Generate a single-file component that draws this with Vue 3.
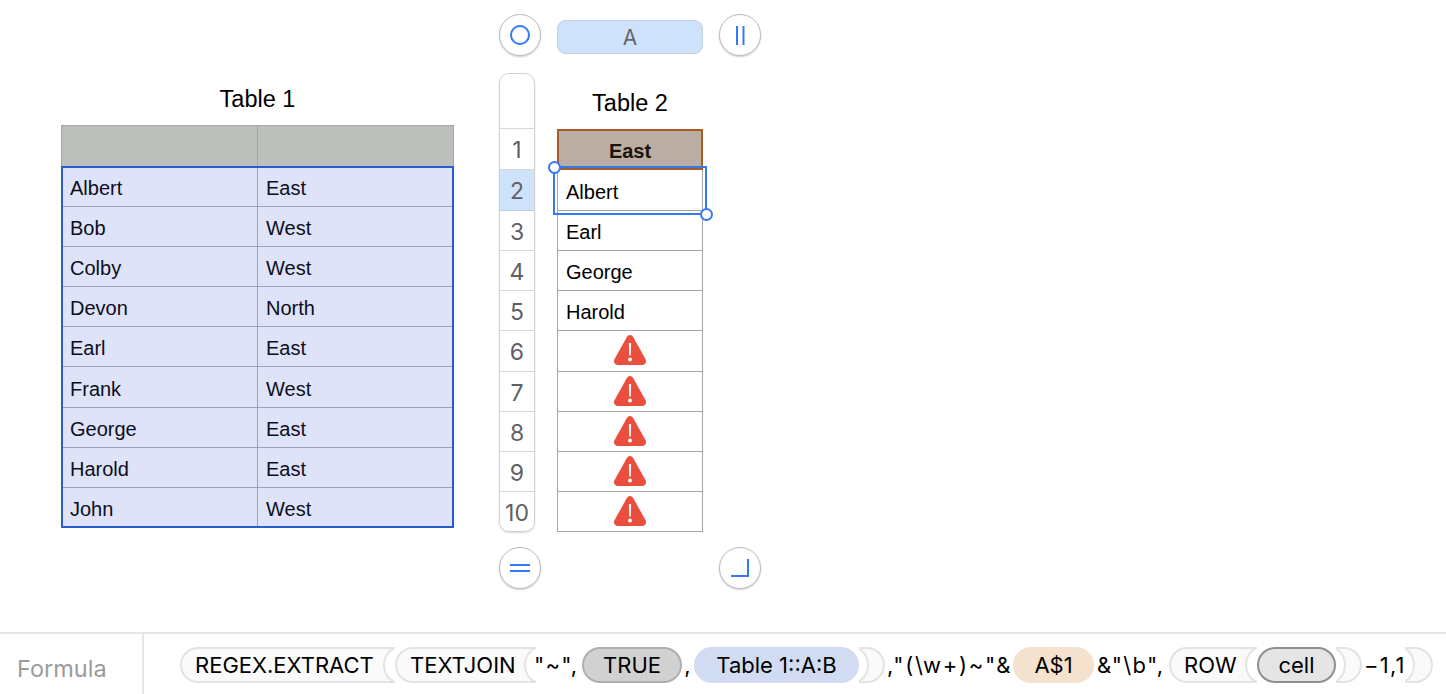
<template>
  <div class="page">
    <div class="canvas">
      <!-- Table 1 -->
      <div class="table-one">
        <div class="title">Table 1</div>
        <div class="t1-head">
          <div class="t1-hcell"></div>
          <div class="t1-hcell"></div>
        </div>
        <div class="t1-body">
          <template v-for="row in source" :key="row[0]">
            <div class="t1-cell">{{ row[0] }}</div>
            <div class="t1-cell">{{ row[1] }}</div>
          </template>
          <div class="t1-outline"></div>
        </div>
      </div>

      <!-- Table 2 with edit controls -->
      <div class="table-two">
        <div class="ctrl-row">
          <button class="round">
            <svg width="22" height="22" viewBox="0 0 22 22" fill="none" stroke="#3478f6" stroke-width="2"><circle cx="11" cy="11" r="9"/></svg>
          </button>
          <div class="col-tab">A</div>
          <button class="round">
            <svg width="22" height="22" viewBox="0 0 22 22" fill="none" stroke="#3478f6" stroke-width="2"><line x1="8" y1="2" x2="8" y2="21"/><line x1="14.500" y1="2" x2="14.500" y2="21"/></svg>
          </button>
        </div>

        <div class="mid-row">
          <div class="row-heads">
            <div class="rh-top"></div>
            <div class="rh-grid">
              <div v-for="n in 10" :key="n" class="rh-cell" :class="{ on: n === 2 }">{{ n }}</div>
            </div>
          </div>
          <div class="t2-col">
            <div class="t2-title">Table 2</div>
            <div class="t2-grid">
              <div class="t2-head">East</div>
              <div v-for="(v, i) in results" :key="i" class="t2-cell">
                <template v-if="v">{{ v }}</template>
                <svg v-else class="warn" width="32" height="30" viewBox="0 0 32 30">
                  <path d="M16 0C17.400 0 18.400 .8 19.300 2.200L31.300 23.800C33 27 31.400 30 27.800 30L4.200 30C.6 30 -1 27 .7 23.800L12.700 2.200C13.600 .8 14.600 0 16 0Z" fill="#ea4f3d"/>
                  <path d="M14.900 8.500C14.900 7.700 17.100 7.700 17.100 8.500L16.800 20C16.700 20.700 15.300 20.700 15.200 20Z" fill="#fff"/>
                  <circle cx="16" cy="24.500" r="1.900" fill="#fff"/>
                </svg>
              </div>
              <div class="sel-box">
                <span class="knob tl"></span>
                <span class="knob br"></span>
              </div>
            </div>
          </div>
        </div>

        <div class="ctrl-row bottom">
          <button class="round">
            <svg width="22" height="22" viewBox="0 0 22 22" fill="none" stroke="#3478f6" stroke-width="2"><line x1="1" y1="8" x2="21" y2="8"/><line x1="1" y1="14" x2="21" y2="14"/></svg>
          </button>
          <button class="round">
            <svg width="22" height="22" viewBox="0 0 22 22" fill="none" stroke="#3478f6" stroke-width="2"><path d="M2 19H19V2"/></svg>
          </button>
        </div>
      </div>
    </div>

    <!-- Formula bar -->
    <div class="formula">
      <div class="f-label">Formula</div>
      <div class="f-body">
        <span class="fn w-regex">REGEX.EXTRACT</span>
        <span class="fn w-join">TEXTJOIN</span>
        <span class="lit lit-a">"~",</span>
        <span class="pill grey">TRUE</span>
        <span class="lit lit-b">,</span>
        <span class="pill blue">Table 1::A:B</span>
        <span class="close first"></span>
        <span class="lit lit-c">,"(\w+)~"&amp;</span>
        <span class="pill tan">A$1</span>
        <span class="lit lit-d">&amp;"\b",</span>
        <span class="fn w-row">ROW</span>
        <span class="pill cell">cell</span>
        <span class="close"></span>
        <span class="lit lit-e">−1,1</span>
        <span class="close last"></span>
      </div>
    </div>
  </div>
</template>

<script setup>
const source = [
  ['Albert', 'East'],
  ['Bob', 'West'],
  ['Colby', 'West'],
  ['Devon', 'North'],
  ['Earl', 'East'],
  ['Frank', 'West'],
  ['George', 'East'],
  ['Harold', 'East'],
  ['John', 'West'],
]

const results = ['Albert', 'Earl', 'George', 'Harold', '', '', '', '', '']
</script>

<style>
html, body { background: #fff; overflow: hidden; }
</style>

<style scoped>
.page {
  width: 1446px;
  height: 694px;
  display: flex;
  flex-direction: column;
  font-family: "Liberation Sans", Arial, sans-serif;
  overflow: hidden;
}
.canvas {
  height: 632px;
  display: flex;
  align-items: flex-start;
  padding-left: 61px;
  box-sizing: border-box;
}

/* Table 1 */
.table-one { width: 393px; padding-top: 84px; }
.title {
  height: 28px;
  line-height: 30px;
  margin-bottom: 13px;
  text-align: center;
  font-size: 23.500px;
  color: #000;
}
.t1-head {
  display: grid;
  grid-template-columns: 197px 196px;
  height: 41px;
}
.t1-hcell {
  background: #bdbfbd;
  border: 1px solid #a5a7a5;
  border-bottom: none;
}
.t1-hcell + .t1-hcell { border-left: none; }
.t1-body {
  position: relative;
  display: grid;
  grid-template-columns: 197px 196px;
  grid-template-rows: 41px 40px 40px 40px 40px 41px 40px 40px 40px;
  background: #dfe3f7;
}
.t1-cell {
  display: flex;
  align-items: center;
  padding: 4px 0 0 9px;
  box-sizing: border-box;
  font-size: 20px;
  color: #0b0e22;
  border-bottom: 1px solid #9ea2b8;
}
.t1-cell:nth-child(even) { padding-left: 8px; }
.t1-cell:nth-child(odd) { border-right: 1px solid #9ea2b8; }
.t1-outline {
  position: absolute;
  inset: 0;
  border: 2px solid #2a5bd0;
  pointer-events: none;
}

/* Table 2 */
.table-two { width: 262px; margin-left: 45px; padding-top: 14px; }
.ctrl-row {
  display: flex;
  align-items: center;
  justify-content: space-between;
  height: 42px;
}
.ctrl-row.bottom { margin-top: 15px; }
.round {
  width: 42px;
  height: 42px;
  padding: 0;
  display: flex;
  align-items: center;
  justify-content: center;
  background: #fff;
  border: 1px solid #bdbdbd;
  border-radius: 50%;
  box-shadow: 0 1px 2px rgba(0, 0, 0, 0.2);
  box-sizing: border-box;
}
.col-tab {
  width: 146px;
  height: 34px;
  margin-top: 3px;
  line-height: 36px;
  text-align: center;
  background: #cfe2fb;
  border-radius: 9px;
  box-shadow: inset 0 0 0 1px #c4d0de;
  font-family: Inter, sans-serif;
  font-size: 21px;
  color: #66666c;
}
.mid-row {
  display: flex;
  margin-top: 17px;
  gap: 22px;
}
.row-heads {
  width: 36px;
  box-sizing: border-box;
  border: 1px solid #d2d2d2;
  border-radius: 10px;
  box-shadow: 0 1px 2px rgba(0, 0, 0, 0.15);
  overflow: hidden;
}
.rh-top { height: 54px; border-bottom: 1px solid #d8d8d8; }
.rh-grid {
  display: grid;
  grid-template-rows: 41px 41px 40px 40px 40px 41px 40px 40px 40px 39px;
}
.rh-cell {
  display: flex;
  align-items: center;
  justify-content: center;
  padding-top: 2px;
  box-sizing: border-box;
  border-bottom: 1px solid #d8d8d8;
  font-family: Inter, sans-serif;
  font-size: 23px;
  color: #5f5f66;
}
.rh-cell:last-child { border-bottom: none; }
.rh-cell.on { background: #cfe2fb; border-bottom-color: #b9cde6; }
.t2-col { width: 146px; }
.t2-title {
  height: 56px;
  line-height: 60px;
  text-align: center;
  font-size: 23.500px;
  color: #000;
}
.t2-grid {
  position: relative;
  display: grid;
  grid-template-rows: 41px 41px 40px 40px 40px 41px 40px 40px 40px 40px;
}
.t2-head {
  display: flex;
  align-items: center;
  justify-content: center;
  padding-top: 4px;
  background: #baaea4;
  border: 2px solid #a95d24;
  box-sizing: border-box;
  font-size: 20px;
  font-weight: 700;
  color: #1d130c;
}
.t2-cell {
  display: flex;
  align-items: center;
  padding: 4px 0 0 8px;
  box-sizing: border-box;
  border: 1px solid #a5a5a5;
  border-top: none;
  font-size: 20px;
  color: #000;
}
.warn { margin: 0 auto; transform: translate(-4px, -3px); }
.sel-box {
  position: absolute;
  left: -4px;
  top: 37px;
  width: 154px;
  height: 49px;
  box-sizing: border-box;
  border: 2px solid #3478f6;
  pointer-events: none;
}
.knob {
  position: absolute;
  width: 13px;
  height: 13px;
  box-sizing: border-box;
  background: #fff;
  border: 2px solid #3478f6;
  border-radius: 50%;
}
.knob.tl { left: -7.500px; top: -7.500px; }
.knob.br { right: -7.500px; bottom: -7.500px; }

/* Formula bar */
.formula {
  height: 62px;
  display: flex;
  box-sizing: border-box;
  border-top: 2px solid #e6e6e6;
  font-family: Inter, sans-serif;
}
.f-label {
  width: 144px;
  box-sizing: border-box;
  padding: 20px 0 0 17px;
  border-right: 2px solid #e6e6e6;
  font-size: 23.500px;
  color: #9b9b9b;
}
.f-body {
  display: flex;
  align-items: center;
  height: 36px;
  margin-top: 13px;
  padding-left: 36px;
  font-size: 22px;
  color: #000;
  white-space: nowrap;
}
.fn {
  position: relative;
  height: 36px;
  box-sizing: border-box;
  display: flex;
  align-items: center;
  padding-left: 13px;
  background: #fafafa;
  border: 2px solid #e3e3e3;
  border-right: none;
  border-radius: 18px 0 0 18px;
  overflow: hidden;
}
.fn::after {
  content: "";
  position: absolute;
  right: -22px;
  top: -3px;
  width: 34px;
  height: 38px;
  box-sizing: border-box;
  background: #fff;
  border: 2px solid #e3e3e3;
  border-radius: 50%;
}
.w-regex { width: 215px; }
.w-join { width: 141px; margin-right: -2px; }
.w-row { width: 88px; }
.lit { display: block; letter-spacing: 1.200px; position: relative; }
.lit-a { width: 48px; }
.lit-b { width: 12px; text-align: center; }
.lit-c { width: 126px; margin-left: 2px; letter-spacing: 1.700px; }
.lit-d { width: 72px; margin-left: 3px; letter-spacing: 1.300px; }
.lit-e { width: 41px; margin-left: 4px; letter-spacing: 1.200px; }
.pill {
  position: relative;
  z-index: 1;
  height: 36px;
  box-sizing: border-box;
  display: flex;
  align-items: center;
  justify-content: center;
  border-radius: 18px;
}
.pill.grey { width: 100px; background: #d1d1d1; border: 2px solid #aeaeae; }
.pill.blue { width: 165px; background: #d1dcf2; }
.pill.tan { width: 81px; background: #f4e2cf; }
.pill.cell { width: 79px; background: #e5e5e5; border: 2px solid #8f8f8f; }
.close {
  position: relative;
  width: 26px;
  height: 36px;
  margin-right: -2px;
  box-sizing: border-box;
  background: #fafafa;
  border: 2px solid #e3e3e3;
  border-left: none;
  border-radius: 0 18px 18px 0;
  overflow: hidden;
}
.close.first { margin-right: 0; }
.close::before {
  content: "";
  position: absolute;
  left: -24px;
  top: -3px;
  width: 34px;
  height: 38px;
  box-sizing: border-box;
  background: #fff;
  border: 2px solid #e3e3e3;
  border-radius: 50%;
}
.close.last { width: 28px; }
</style>
